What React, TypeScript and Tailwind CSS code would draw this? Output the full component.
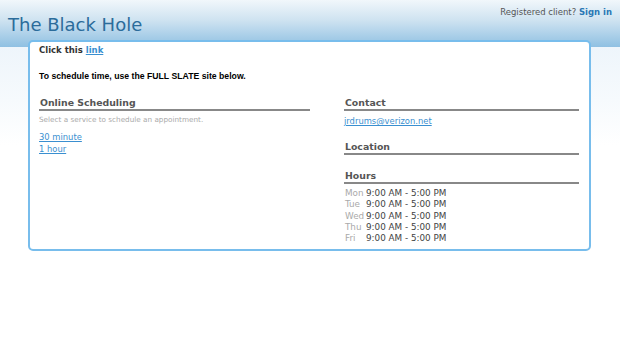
export default function App() {
  const hours = ["Mon", "Tue", "Wed", "Thu", "Fri"];
  const heading =
    "text-[9.35px] font-bold text-[#555] leading-[13px] pl-[1px] border-b-2 border-[#888]";
  return (
    <div
      className="w-[620px] h-[343px] overflow-hidden bg-[linear-gradient(to_bottom,#f1f7fb_0px,#cfe3f1_20px,#8fc0e2_47px,#eef5fb_47px,#f6fafd_100px,#ffffff_145px)]"
      style={{ fontFamily: '"DejaVu Sans", Verdana, sans-serif' }}
    >
      <div className="flex items-start justify-between h-[40px] pl-[8px] pr-[8px]">
        <div className="text-[18px] leading-none text-[#2b6c9b] pt-[16px]">The Black Hole</div>
        <div className="text-[8.5px] leading-none text-[#555] pt-[8px]">
          Registered client? <span className="text-[#2a78b5] font-bold">Sign in</span>
        </div>
      </div>
      <div className="ml-[28px] w-[563px] h-[211px] bg-white border-2 border-[#78bdec] rounded-[5px] pl-[9px] pr-[10px] pt-[2px]">
        <div className="text-[8.5px] font-bold text-[#333] leading-[12px]">
          Click this <a className="text-[#3a8fd0] underline">link</a>
        </div>
        <div
          className="mt-[14px] text-[8.7px] font-bold text-black leading-[12px]"
          style={{ fontFamily: '"Liberation Sans", Arial, sans-serif' }}
        >
          To schedule time, use the FULL SLATE site below.
        </div>
        <div className="flex mt-[14px] gap-[34px]">
          <div className="w-[271px]">
            <div className={heading}>Online Scheduling</div>
            <div className="text-[7.25px] text-[#aaa] mt-[3px] leading-[12px]">
              Select a service to schedule an appointment.
            </div>
            <div className="mt-[6px] text-[8.4px] leading-[11.5px] flex flex-col items-start">
              <a className="text-[#3a8fd0] underline">30 minute</a>
              <a className="text-[#3a8fd0] underline">1 hour</a>
            </div>
          </div>
          <div className="w-[235px]">
            <div className={heading}>Contact</div>
            <div className="text-[8.4px] mt-[4px] leading-[12px]">
              <a className="text-[#3a8fd0] underline">jrdrums@verizon.net</a>
            </div>
            <div className={"mt-[13px] " + heading}>Location</div>
            <div className={"mt-[14px] " + heading}>Hours</div>
            <div className="mt-[4px] flex flex-col">
              {hours.map((d) => (
                <div key={d} className="flex leading-[11.3px] text-[8.8px]">
                  <span className="w-[22px] pl-[1px] text-[#aaa]">{d}</span>
                  <span className="text-[#444]">9:00 AM - 5:00 PM</span>
                </div>
              ))}
            </div>
          </div>
        </div>
      </div>
    </div>
  );
}
